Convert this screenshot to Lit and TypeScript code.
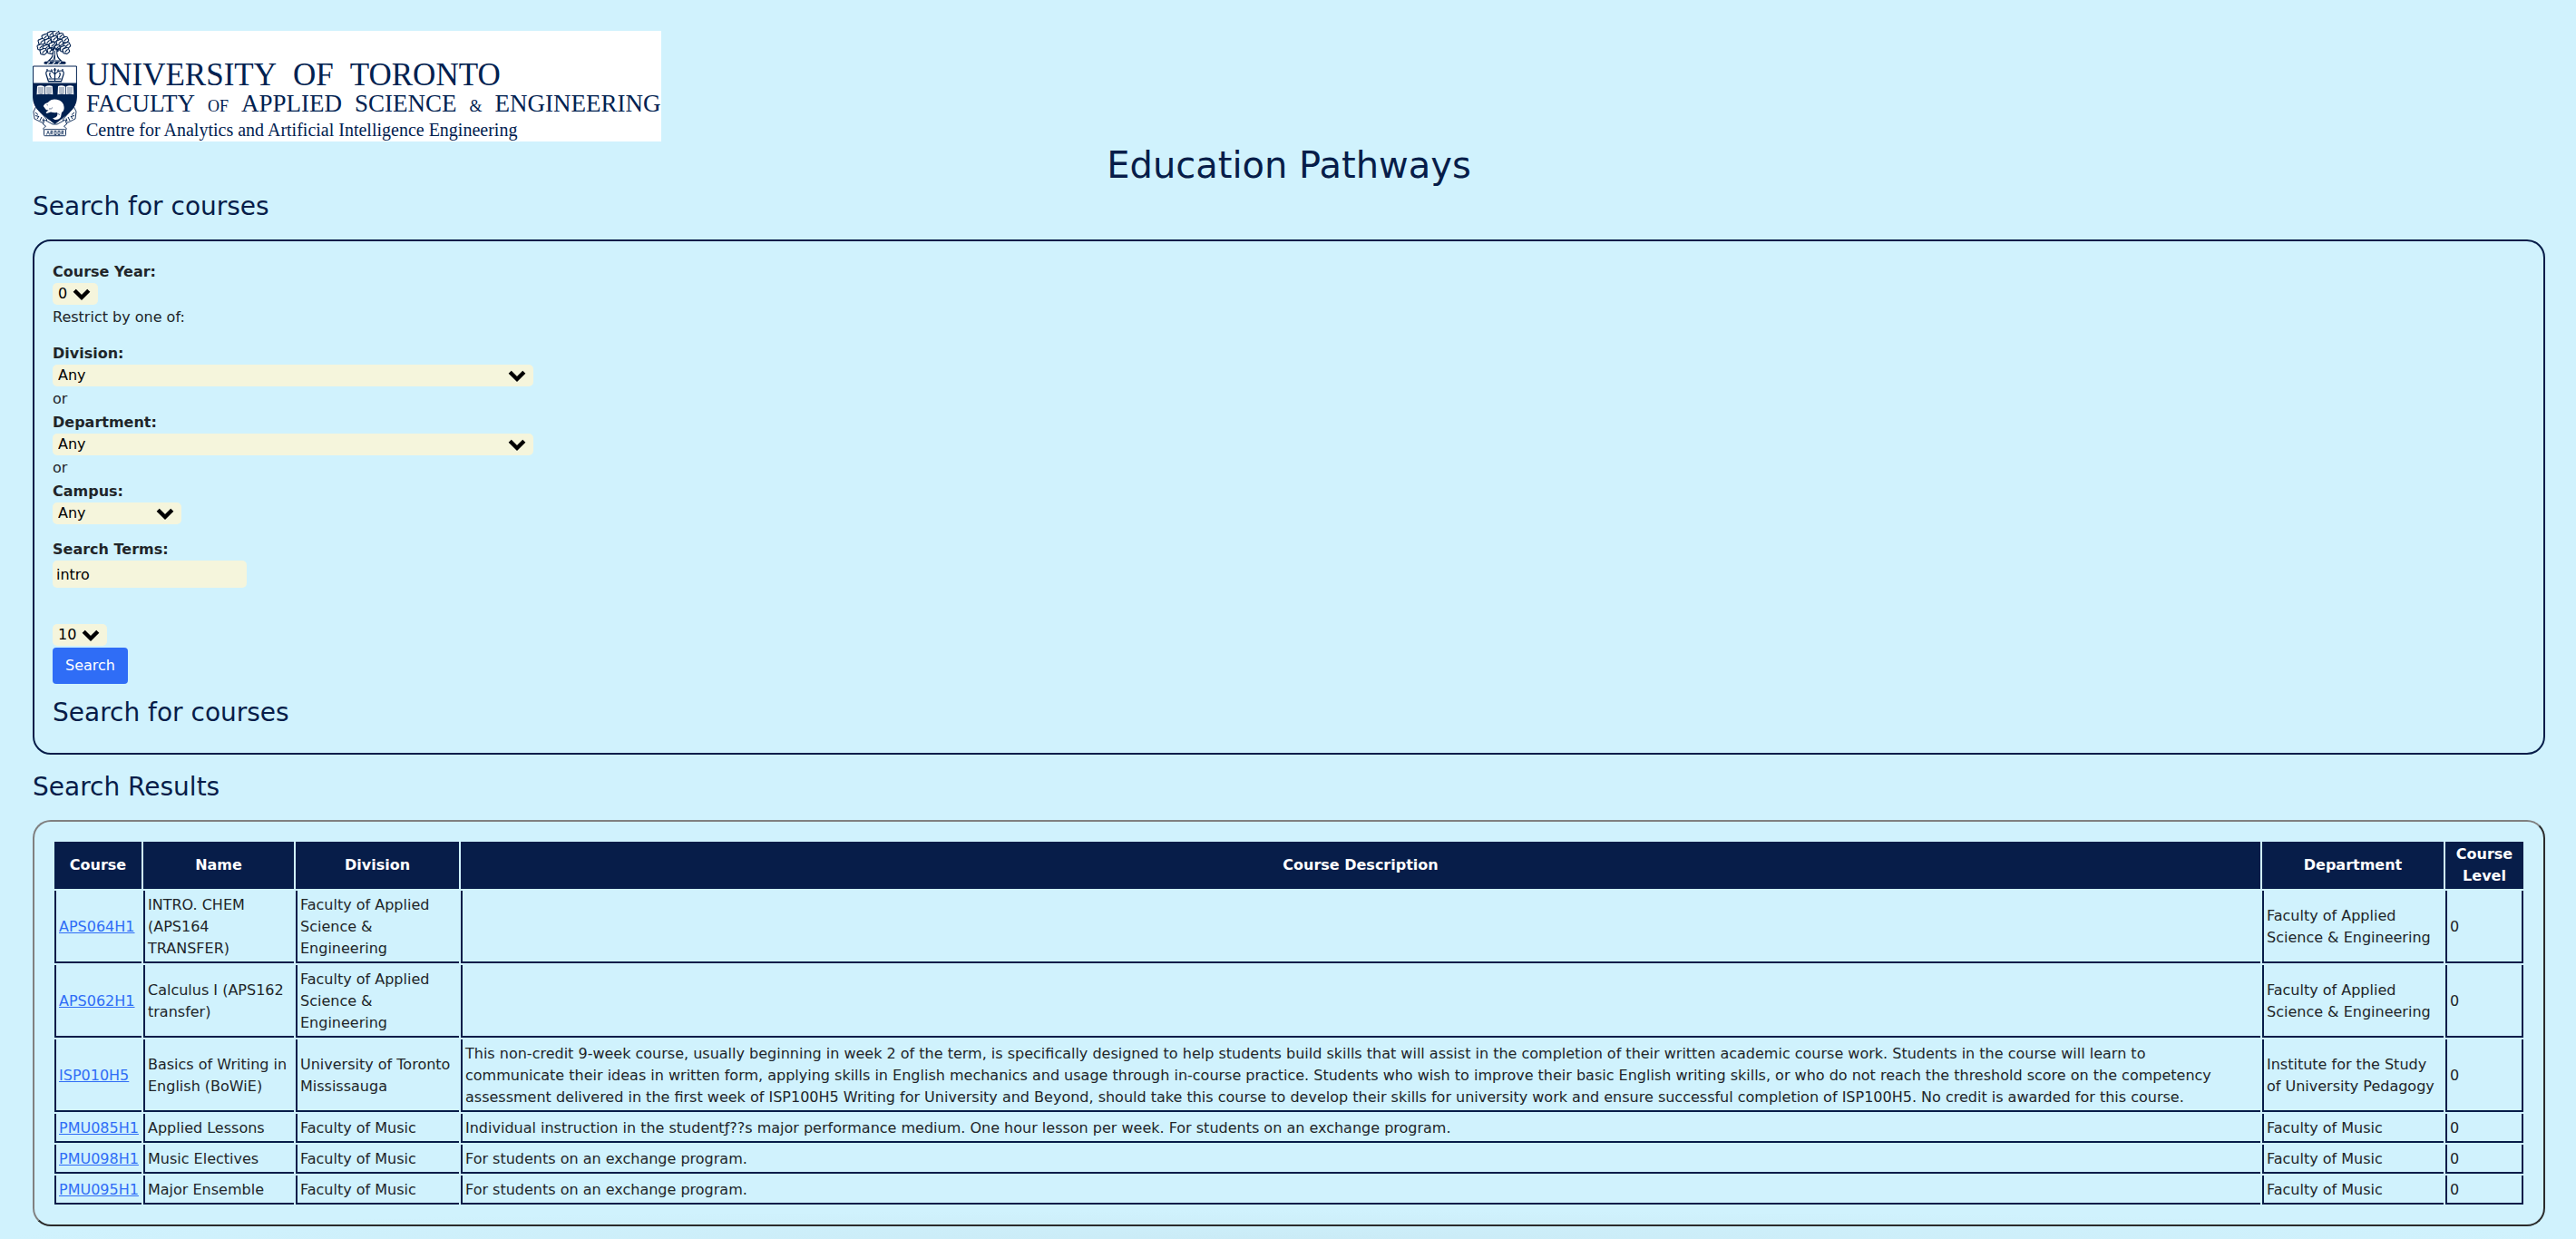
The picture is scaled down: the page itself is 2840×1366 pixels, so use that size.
import { LitElement, html, svg, css } from "lit";
import { customElement, property } from "lit/decorators.js";

interface Course {
  code: string;
  name: string;
  division: string;
  description: string;
  department: string;
  level: number;
}

const APPLIED = "Faculty of Applied Science & Engineering";

const COURSES: Course[] = [
  { code: "APS064H1", name: "INTRO. CHEM (APS164 TRANSFER)", division: APPLIED, description: "", department: APPLIED, level: 0 },
  { code: "APS062H1", name: "Calculus I (APS162 transfer)", division: APPLIED, description: "", department: APPLIED, level: 0 },
  {
    code: "ISP010H5",
    name: "Basics of Writing in English (BoWiE)",
    division: "University of Toronto Mississauga",
    description:
      "This non-credit 9-week course, usually beginning in week 2 of the term, is specifically designed to help students build skills that will assist in the completion of their written academic course work. Students in the course will learn to communicate their ideas in written form, applying skills in English mechanics and usage through in-course practice. Students who wish to improve their basic English writing skills, or who do not reach the threshold score on the competency assessment delivered in the first week of ISP100H5 Writing for University and Beyond, should take this course to develop their skills for university work and ensure successful completion of ISP100H5. No credit is awarded for this course.",
    department: "Institute for the Study of University Pedagogy",
    level: 0,
  },
  {
    code: "PMU085H1",
    name: "Applied Lessons",
    division: "Faculty of Music",
    description:
      "Individual instruction in the studentƒ??s major performance medium. One hour lesson per week. For students on an exchange program.",
    department: "Faculty of Music",
    level: 0,
  },
  { code: "PMU098H1", name: "Music Electives", division: "Faculty of Music", description: "For students on an exchange program.", department: "Faculty of Music", level: 0 },
  { code: "PMU095H1", name: "Major Ensemble", division: "Faculty of Music", description: "For students on an exchange program.", department: "Faculty of Music", level: 0 },
];

/* Leaf clusters of the crest's oak: centre x, centre y. */
const LEAVES = [
  [20, 4], [26, 3], [31, 6], [14, 7], [36, 10], [10, 12], [17, 12], [24, 9], [30, 13],
  [38, 16], [9, 18], [15, 19], [22, 16], [34, 20], [27, 19], [12, 23], [37, 22], [20, 22],
];

@customElement("university-logo")
export class UniversityLogo extends LitElement {
  static styles = css`
    :host {
      display: block;
      width: fit-content;
      background: #fff;
      color: #002150;
      font-family: "Liberation Serif", serif;
    }
    .logo {
      display: flex;
      gap: 10px;
    }
    .crest {
      display: block;
      flex: none;
    }
    .words {
      padding-top: 34px;
    }
    .line {
      display: flex;
      align-items: baseline;
      white-space: nowrap;
    }
    .university {
      gap: 18px;
      font-size: 35px;
      line-height: 30px;
    }
    .faculty {
      gap: 14px;
      font-size: 27px;
      line-height: 32px;
    }
    .minor {
      font-size: 18px;
      line-height: 18px;
    }
    .centre {
      font-size: 20px;
      line-height: 26px;
    }
  `;

  render() {
    return html`
      <div class="logo">
        <svg class="crest" width="49" height="122" viewBox="0 0 49 122" aria-hidden="true">
          <g fill="#fff" stroke="#002150" stroke-width="1.1">
            ${LEAVES.map(
              ([x, y]) => svg`
                <path d="M${x} ${y - 3.4}q3 -.4 2.8 2q2 2 -.4 3.4q-1.4 2.2 -3.2 .8q-3 .6 -2.6 -2.2q-1.6 -2.6 1 -3z" />
                <path d="M${x - 1.4} ${y + 1.4}l3 -3" />`
            )}
          </g>
          <path d="M22.6 22q.6 7 -5 11h13.8q-5.4 -4 -4.6 -11l3 -3l-4 2l-1.3 -3l-1.3 3l-3.6 -2z" fill="#fff" stroke="#002150" stroke-width="1.1" />
          <path d="M24.5 22v10M22 33q2 -3 2 -6" fill="none" stroke="#002150" stroke-width=".9" />
          <rect x="12.5" y="33.8" width="24" height="3" rx="1.5" fill="#002150" />
          <path d="M16 36.2l3 -2M22 36.2l3 -2M28 36.2l3 -2" stroke="#fff" stroke-width="1.1" />
          <g fill="#fff" stroke="#002150" stroke-width=".9">
            <path d="M4 83l-3 6l1 8l10 5l4 -4l-8 -9z" />
            <path d="M45 83l3 6l-1 8l-10 5l-4 -4l8 -9z" />
            <path d="M13 98l-1.5 5l3 2l-3 3l3 3h20l3 -3l-3 -3l3 -2l-1.5 -5l-9 5h-5z" />
            <rect x="12.5" y="108.7" width="24" height="7" rx="1" />
          </g>
          <g fill="none" stroke="#002150" stroke-width="1">
            <path d="M3 90l3 2.5M3 93.5l4 1M5 97l2 -3M8 99l2 -4M11 100l1 -3.5" />
            <path d="M46 90l-3 2.5M46 93.5l-4 1M44 97l-2 -3M41 99l-2 -4M38 100l-1 -3.5" />
            <path d="M15.5 114.5l1.5 -4l1.5 4M20 114.5v-4h1.8v1.8l-1.5 .2l2 2M24 114.5v-4h2v4zM28 110.5h2v4h-2zM32 114.5v-4h1.8v1.8l-1.5 .2l2 2" stroke-width=".8" />
          </g>
          <path d="M.6 39h47.8v34c0 14 -12 20 -23.9 29.5c-11.9 -9.5 -23.9 -15.5 -23.9 -29.5z" fill="#fff" stroke="#002150" stroke-width="1" />
          <path d="M.6 57.5h47.8v15.5c0 14 -12 20 -23.9 29.5c-11.9 -9.5 -23.9 -15.5 -23.9 -29.5z" fill="#002150" />
          <g fill="none" stroke="#002150" stroke-width="1.2">
            <path d="M17.5 56l-2.5 -8q-1 -4 2.5 -4q4 0 7 4q3 -4 7 -4q3.5 0 2.5 4l-2.5 8z" />
            <path d="M24.5 41v14M22.8 43h3.4M17.5 53h14M20.5 52q-3 -4 -1 -6M28.5 52q3 -4 1 -6M18 55.5h13" />
            <path d="M16 42v2M33 42v2M20.5 42.5l1 2M28.5 42.5l-1 2" />
          </g>
          <g fill="#fff">
            <path d="M5 61q4 -1.5 8 .4v8.6q-4 -1 -8.5 .2z" />
            <path d="M13.8 61.4q4 -1.9 8 -.4l.5 9.2q-4.5 -1.2 -8.5 -.2z" />
            <path d="M28 61q4 -1.5 8 .4v8.6q-4 -1 -8.5 .2z" />
            <path d="M36.8 61.4q4 -1.9 8 -.4l.5 9.2q-4.5 -1.2 -8.5 -.2z" />
            <path d="M11.8 83q1 -3 5 -4q4 -4.500 10 -3.200q7 1.200 7.800 8.200q.4 4 -2.600 6l-1 5q-2 3.500 -6.500 3l-2.500 -1.500l4 -1.500q2 -2.500 1 -5q-4 .5 -7 -.5l-4.500 1.500l-1 -1l3 -2.500q-3 0 -3.500 -1.500z" />
          </g>
          <g fill="none" stroke="#002150" stroke-width=".6">
            <path d="M7 62v7M9 62v7M11 62v7M16 62v7M18 62v7M20 62v7M30 62v7M32 62v7M34 62v7M39 62v7M41 62v7M43 62v7" />
            <path d="M15.500 81.500l1.500 .5M18 86q3 .5 4 -1.500M27 91l3 1.500" />
          </g>
        </svg>
        <div class="words">
          <div class="line university"><span>UNIVERSITY</span> <span>OF</span> <span>TORONTO</span></div>
          <div class="line faculty">
            <span>FACULTY</span> <span class="minor">OF</span> <span>APPLIED</span> <span>SCIENCE</span>
            <span class="minor">&amp;</span> <span>ENGINEERING</span>
          </div>
          <div class="line centre">Centre for Analytics and Artificial Intelligence Engineering</div>
        </div>
      </div>
    `;
  }
}

@customElement("select-field")
export class SelectField extends LitElement {
  @property() label = "";
  @property() value = "";
  @property() size: "digit" | "number" | "short" | "long" = "short";
  @property({ type: Boolean }) unlabelled = false;

  static styles = css`
    :host {
      display: block;
    }
    .label {
      display: block;
      font-weight: 700;
    }
    .box {
      position: relative;
      width: fit-content;
      max-width: 100%;
    }
    .select {
      display: block;
      appearance: none;
      box-sizing: border-box;
      max-width: 100%;
      height: 24px;
      margin: 0;
      padding: 0 28px 0 6px;
      border: 0;
      border-radius: 5px;
      background: #f5f5dc;
      color: #000;
      font: inherit;
    }
    .digit {
      width: 50px;
    }
    .number {
      width: 60px;
    }
    .short {
      width: 142px;
    }
    .long {
      width: 530px;
    }
    .arrow {
      position: absolute;
      top: 6px;
      right: 8px;
      pointer-events: none;
    }
  `;

  render() {
    return html`
      ${this.unlabelled ? null : html`<label class="label" for="field">${this.label}</label>`}
      <div class="box">
        <select class="select ${this.size}" id="field" aria-label=${this.label}>
          <option>${this.value}</option>
        </select>
        <svg class="arrow" width="20" height="14" viewBox="0 0 20 14" aria-hidden="true">
          <path d="M2.2 2.2l7.8 7.8l7.8 -7.8" fill="none" stroke="#000" stroke-width="4.4" />
        </svg>
      </div>
    `;
  }
}

@customElement("app-root")
export class AppRoot extends LitElement {
  static styles = css`
    :host {
      display: block;
      box-sizing: border-box;
      min-height: 100vh;
      padding: 34px 34px 14px 36px;
      background: radial-gradient(ellipse 50% 32px at 50% 100%, #caebf6, #d0f2fd) #d0f2fd;
      color: #212529;
      font-family: Verdana, "DejaVu Sans", sans-serif;
      font-size: 16px;
      line-height: 24px;
    }
    .title,
    .heading {
      margin: 0;
      color: #071d49;
      font-weight: 400;
    }
    .title {
      margin-top: 2px;
      font-size: 40px;
      line-height: 48px;
      text-align: center;
    }
    .heading {
      font-size: 28px;
      line-height: 34px;
    }
    .search-heading {
      margin: 5px 0 19px;
    }
    .results-heading {
      margin: 19px 0;
    }
    .panel {
      padding: 20px;
      border: 2px solid #071d49;
      border-radius: 20px;
    }
    .search {
      padding-top: 22px;
    }
    .results {
      border-color: #808080 #2b2b2b #2b2b2b #808080;
    }
    .form {
      display: flex;
      flex-direction: column;
      gap: 2px;
    }
    .restrict {
      margin-bottom: 14px;
    }
    .terms {
      margin-top: 14px;
      margin-bottom: 38px;
    }
    .label {
      display: block;
      font-weight: 700;
    }
    .input {
      display: block;
      box-sizing: border-box;
      width: 214px;
      height: 30px;
      margin: 0;
      padding: 2px 4px;
      border: 0;
      border-radius: 5px;
      background: #f5f5dc;
      color: #000;
      font: inherit;
    }
    .button {
      align-self: flex-start;
      height: 40px;
      padding: 0 14px;
      border: 0;
      border-radius: 4px;
      background: #2f6df6;
      color: #fff;
      font: inherit;
    }
    .form-heading {
      margin: 15px 0 7px;
    }
    .table {
      width: 100%;
      table-layout: fixed;
      border-spacing: 2px;
      border-collapse: separate;
    }
    .code {
      width: 96px;
    }
    .name {
      width: 166px;
    }
    .division {
      width: 180px;
    }
    .department {
      width: 200px;
    }
    .level {
      width: 86px;
    }
    .head {
      box-sizing: border-box;
      padding: 2px;
      background: #071d49;
      color: #fff;
      font-weight: 700;
      text-align: center;
    }
    .cell {
      padding: 4px 2px 2px 3px;
      border: 0 solid #071d49;
      border-width: 0 0 2px 2px;
    }
    .cell:last-child {
      border-right-width: 2px;
    }
    .description {
      padding-right: 20px;
    }
    .link {
      color: #2f6df6;
      text-decoration: underline;
    }
  `;

  render() {
    return html`
      <header>
        <university-logo></university-logo>
        <h1 class="title">Education Pathways</h1>
      </header>
      <main>
        <h2 class="heading search-heading">Search for courses</h2>
        <section class="panel search">
          <form class="form" @submit=${(e: Event) => e.preventDefault()}>
            <select-field label="Course Year:" value="0" size="digit"></select-field>
            <div class="restrict">Restrict by one of:</div>
            <select-field label="Division:" value="Any" size="long"></select-field>
            <div>or</div>
            <select-field label="Department:" value="Any" size="long"></select-field>
            <div>or</div>
            <select-field label="Campus:" value="Any"></select-field>
            <div class="terms">
              <label class="label" for="terms">Search Terms:</label>
              <input class="input" id="terms" type="text" value="intro" />
            </div>
            <select-field label="Results per page" value="10" size="number" unlabelled></select-field>
            <button class="button" type="submit">Search</button>
          </form>
          <h2 class="heading form-heading">Search for courses</h2>
        </section>
        <h2 class="heading results-heading">Search Results</h2>
        <section class="panel results">
          <table class="table">
            <thead>
              <tr>
                <th class="head code" scope="col">Course</th>
                <th class="head name" scope="col">Name</th>
                <th class="head division" scope="col">Division</th>
                <th class="head" scope="col">Course Description</th>
                <th class="head department" scope="col">Department</th>
                <th class="head level" scope="col">Course Level</th>
              </tr>
            </thead>
            <tbody>
              ${COURSES.map(
                (c) => html`
                  <tr>
                    <td class="cell"><a class="link" href="#${c.code}">${c.code}</a></td>
                    <td class="cell">${c.name}</td>
                    <td class="cell">${c.division}</td>
                    <td class="cell description">${c.description}</td>
                    <td class="cell">${c.department}</td>
                    <td class="cell">${c.level}</td>
                  </tr>
                `
              )}
            </tbody>
          </table>
        </section>
      </main>
    `;
  }
}
